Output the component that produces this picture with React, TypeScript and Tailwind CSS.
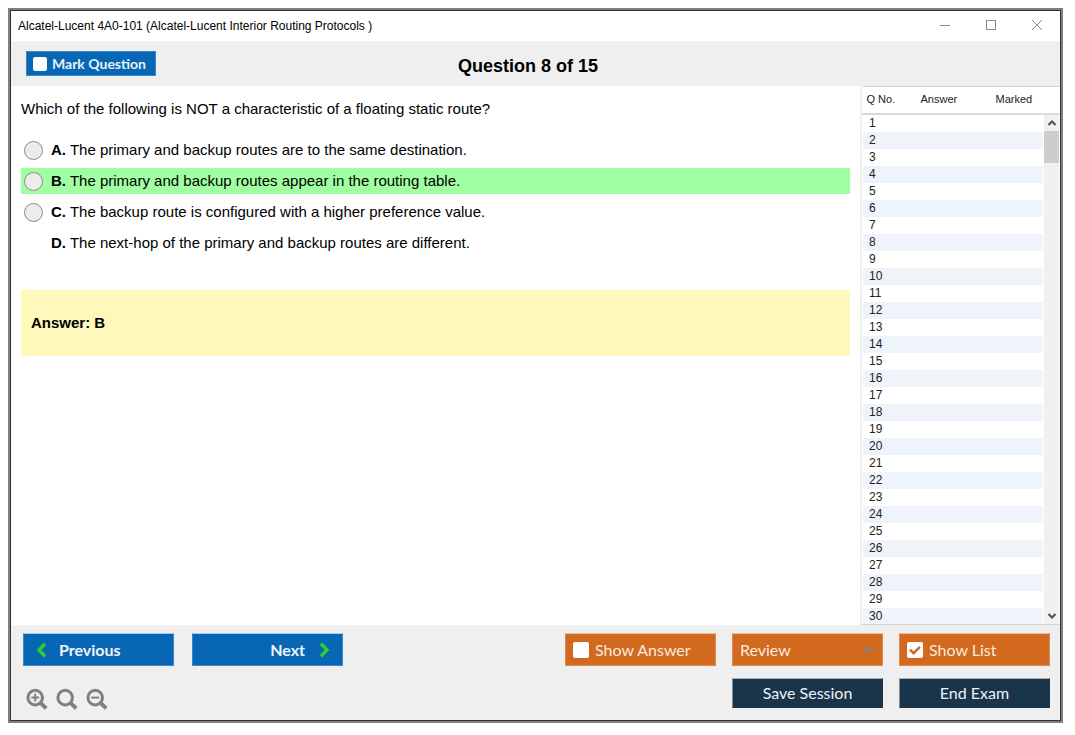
import { useState } from "react";
import { clsx } from "clsx";

type Option = {
  letter: string;
  text: string;
  selectable: boolean;
};

const options: Option[] = [
  { letter: "A", text: "The primary and backup routes are to the same destination.", selectable: true },
  { letter: "B", text: "The primary and backup routes appear in the routing table.", selectable: true },
  { letter: "C", text: "The backup route is configured with a higher preference value.", selectable: true },
  { letter: "D", text: "The next-hop of the primary and backup routes are different.", selectable: false },
];

const correctLetter = "B";
const questionNumbers = Array.from({ length: 30 }, (_, i) => i + 1);

const navButton =
  "flex h-[33px] w-[151px] items-center border border-[#3d87c6] border-t-[#a9cae4] bg-[#0867b5] font-['Lato',sans-serif] text-base font-bold text-[#eef5fb]";
const orangeButton =
  "flex h-[33px] w-[151px] items-center border border-[#dc8a4c] border-t-[#e9c0a0] bg-[#d2691e] font-['Lato',sans-serif] text-base text-[#fbeadf]";
const darkButton =
  "h-[30px] w-[151px] border border-[#1a344a] border-l-[#7f909c] border-t-[#a9b5be] bg-[#1a344a] font-['Lato',sans-serif] text-base leading-7 text-[#eef2f5]";

function TitleBar() {
  return (
    <header className="flex h-[30px] shrink-0 items-center justify-between bg-white pl-[7px] pr-[17px]">
      <span className="truncate text-xs text-black">
        Alcatel-Lucent 4A0-101 (Alcatel-Lucent Interior Routing Protocols )
      </span>
      <div className="flex items-center gap-[34px] pb-[2px] text-[#8a8a8a]">
        <button type="button" aria-label="Minimize">
          <svg className="h-3 w-3" viewBox="0 0 12 12" stroke="currentColor">
            <path d="M1 6.5h10" />
          </svg>
        </button>
        <button type="button" aria-label="Maximize">
          <svg className="h-3 w-3" viewBox="0 0 12 12" fill="none" stroke="currentColor">
            <rect x="1.5" y="1.5" width="9" height="9" />
          </svg>
        </button>
        <button type="button" aria-label="Close">
          <svg className="h-3 w-3" viewBox="0 0 12 12" stroke="currentColor">
            <path d="M1 1l10 10M11 1L1 11" />
          </svg>
        </button>
      </div>
    </header>
  );
}

function CheckBox({
  checked,
  onChange,
  small,
}: {
  checked: boolean;
  onChange: (value: boolean) => void;
  small?: boolean;
}) {
  return (
    <span className="relative flex">
      <input
        type="checkbox"
        checked={checked}
        onChange={(e) => onChange(e.target.checked)}
        className={clsx("appearance-none rounded-xs bg-white", small ? "size-[14px]" : "size-4")}
      />
      {checked && (
        <svg
          className="pointer-events-none absolute inset-0 size-full"
          viewBox="0 0 16 16"
          fill="none"
          stroke="#d2691e"
          strokeWidth="2.6"
        >
          <path d="M3 7.6l3.6 3.6L13 4.8" />
        </svg>
      )}
    </span>
  );
}

function QuestionList() {
  return (
    <aside className="relative w-[200px] shrink-0 overflow-hidden border-b border-l-2 border-b-[#d5d5d5] border-l-[#f0f0f0] bg-white">
      <table className="w-full table-fixed border-collapse text-xs text-[#222]">
        <thead>
          <tr className="h-[27px] border-b-2 border-t border-b-[#dadada] border-t-[#d5d5d5] text-[11px]">
            <th className="w-[58px] p-0 pl-1 text-left font-normal">Q No.</th>
            <th className="w-[75px] p-0 text-left font-normal">Answer</th>
            <th className="p-0 text-left font-normal">Marked</th>
          </tr>
        </thead>
        <tbody>
          {questionNumbers.map((n) => (
            <tr key={n} className="h-[17px] border-l border-l-white even:bg-[#eef4f9]">
              <td className="p-0 pl-[6px] leading-[17px]">{n}</td>
              <td />
              <td />
            </tr>
          ))}
        </tbody>
      </table>

      {/* scrollbar */}
      <div className="absolute bottom-0 right-0 top-[29px] flex w-[17px] flex-col items-stretch border-x border-white bg-[#f0f0f0]">
        <button type="button" aria-label="Scroll up" className="flex h-4 items-center justify-center">
          <svg className="h-2 w-2" viewBox="0 0 8 8" fill="none" stroke="#505050" strokeWidth="2">
            <path d="M0.5 6L4 2.5L7.5 6" />
          </svg>
        </button>
        <div className="h-[32px] bg-[#cdcdcd]" />
        <button type="button" aria-label="Scroll down" className="mt-auto flex h-4 items-center justify-center">
          <svg className="h-2 w-2" viewBox="0 0 8 8" fill="none" stroke="#505050" strokeWidth="2">
            <path d="M0.5 2L4 5.5L7.5 2" />
          </svg>
        </button>
      </div>
    </aside>
  );
}

function ZoomButton({ label, sign }: { label: string; sign?: string }) {
  return (
    <button type="button" aria-label={label}>
      <svg className="size-[22px]" viewBox="0 0 22 22" fill="none" stroke="#808080">
        <circle cx="9.2" cy="9.6" r="7.3" strokeWidth="3" />
        <path d="M14.2 14.6L20.2 20.4" strokeWidth="4" />
        {sign && <path d={sign} strokeWidth="2" />}
      </svg>
    </button>
  );
}

export default function App() {
  const [marked, setMarked] = useState(false);
  const [showAnswer, setShowAnswer] = useState(false);
  const [showList, setShowList] = useState(true);
  const [selected, setSelected] = useState("");

  return (
    <div className="h-screen bg-white pb-3 pl-2 pr-3 pt-2 font-['Liberation_Sans',Arial,sans-serif] text-black">
      <div className="h-full border-2 border-[#808080]">
        <div className="flex h-full flex-col border border-[#333]">
          <TitleBar />

          <div className="grid h-[45px] shrink-0 grid-cols-[1fr_auto_1fr] items-center bg-[#efefef] pl-[15px] pr-[30px]">
            <label className="flex h-[25px] w-[130px] items-center gap-[5px] border border-[#3d87c6] bg-[#0867b5] pl-[6px] font-['Lato',sans-serif] text-sm font-bold text-[#e6f0f9]">
              <CheckBox small checked={marked} onChange={setMarked} />
              Mark Question
            </label>
            <h1 className="pt-1 text-lg font-bold">Question 8 of 15</h1>
          </div>

          <div className="flex min-h-0 flex-1">
            <main className="min-w-0 flex-1 overflow-hidden bg-white px-[10px] pt-[13px] text-[15px] leading-5">
              <p>Which of the following is NOT a characteristic of a floating static route?</p>

              <div className="mt-[18px] flex flex-col gap-[5px]">
                {options.map((o) => (
                  <label
                    key={o.letter}
                    className={clsx(
                      "flex h-[26px] items-center gap-2 pl-[3px]",
                      o.letter === correctLetter && "bg-[#a0ffa0]"
                    )}
                  >
                    {o.selectable ? (
                      <input
                        type="radio"
                        name="answer"
                        value={o.letter}
                        checked={selected === o.letter}
                        onChange={() => setSelected(o.letter)}
                        className="size-[19px] appearance-none rounded-full border border-[#8a8a8a] bg-[#ececec] checked:border-4"
                      />
                    ) : (
                      <span className="w-[19px]" />
                    )}
                    <span>
                      <b>{o.letter}.</b> {o.text}
                    </span>
                  </label>
                ))}
              </div>

              <div className="mt-[34px] flex h-[66px] items-center bg-[#fff8bb] pl-[10px] font-bold">
                Answer: {correctLetter}
              </div>
            </main>
            {showList && <QuestionList />}
          </div>

          <footer className="flex shrink-0 justify-between bg-[#efefef] px-[10px] pb-[10px] pt-2">
            <div className="pl-[2px]">
              <div className="flex gap-[18px]">
                <button type="button" className={clsx(navButton, "gap-3 pl-3")}>
                  <svg className="h-4 w-[11px]" viewBox="0 0 11 16" fill="none" stroke="#32cd32" strokeWidth="3.4">
                    <path d="M9 1.8L3 8l6 6.2" />
                  </svg>
                  Previous
                </button>
                <button type="button" className={clsx(navButton, "justify-end gap-[14px] pr-3")}>
                  Next
                  <svg className="h-4 w-[11px]" viewBox="0 0 11 16" fill="none" stroke="#32cd32" strokeWidth="3.4">
                    <path d="M2 1.8L8 8l-6 6.2" />
                  </svg>
                </button>
              </div>
              <div className="mt-[22px] flex gap-2 pl-[3px]">
                <ZoomButton label="Zoom in" sign="M5.2 9.6h8M9.2 5.6v8" />
                <ZoomButton label="Reset zoom" />
                <ZoomButton label="Zoom out" sign="M5.2 9.6h8" />
              </div>
            </div>

            <div className="grid grid-cols-3 content-start gap-x-4 gap-y-3">
              <label className={clsx(orangeButton, "gap-[6px] pl-[7px]")}>
                <CheckBox checked={showAnswer} onChange={setShowAnswer} />
                Show Answer
              </label>
              <div className="relative">
                <select aria-label="Review" className={clsx(orangeButton, "appearance-none pl-[7px]")}>
                  <option>Review</option>
                </select>
                <svg
                  className="pointer-events-none absolute right-[9px] top-[13px] h-[6px] w-[11px]"
                  viewBox="0 0 11 6"
                  fill="#8b8179"
                >
                  <path d="M5.5 0L11 6H0z" />
                </svg>
              </div>
              <label className={clsx(orangeButton, "gap-[6px] pl-[7px]")}>
                <CheckBox checked={showList} onChange={setShowList} />
                Show List
              </label>
              <button type="button" className={clsx(darkButton, "col-start-2")}>
                Save Session
              </button>
              <button type="button" className={darkButton}>
                End Exam
              </button>
            </div>
          </footer>
        </div>
      </div>
    </div>
  );
}
